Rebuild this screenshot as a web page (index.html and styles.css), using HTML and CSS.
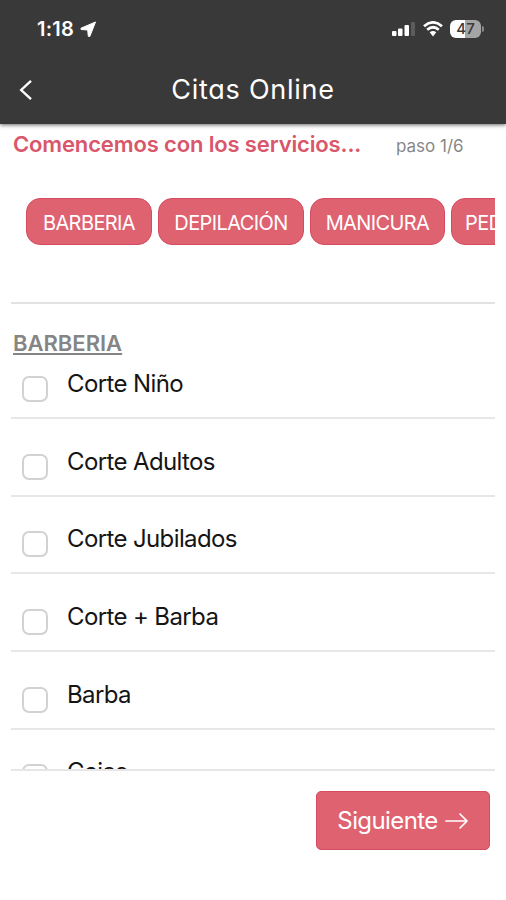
FILE: index.html
```html
<!DOCTYPE html>
<html lang="es">
<head>
<meta charset="utf-8">
<title>Citas Online</title>
<link rel="stylesheet" href="styles.css">
</head>
<body>
<header class="top">
  <div class="status">
    <span class="time">1:18</span>
    <svg class="location" width="17" height="17" viewBox="0 0 17 17"><path d="M15.500 1 9.800 15.500 8.300 15.300 7.700 9 1 8.500 1 7.200Z" fill="#fff" stroke="#fff" stroke-linejoin="round"/></svg>
    <span class="spacer"></span>
    <svg class="signal" width="24" height="16" viewBox="0 0 24 16"><g fill="#fff"><rect x="0" y="10" width="4.500" height="5" rx="1"/><rect x="6" y="7.500" width="4.500" height="7.500" rx="1"/><rect x="12.500" y="4" width="4.500" height="11" rx="1"/><rect x="19" y="1" width="4" height="14" rx="1" opacity=".18"/></g></svg>
    <svg class="wifi" width="20" height="16" viewBox="0 0 20 16"><g fill="none" stroke="#fff" stroke-width="2.700"><path d="M1 5.200Q10-2.500 19 5.200"/><path d="M4.200 8.700Q10 3.800 15.800 8.700"/></g><path d="M6.700 11.300Q10 8.500 13.300 11.300L10 15.500Z" fill="#fff"/></svg>
    <span class="battery">47</span><span class="battery-tip"></span>
  </div>
  <nav class="bar">
    <svg class="back" width="14" height="22" viewBox="0 0 14 22"><path d="M12 1.800 2.200 11l9.800 9.200" fill="none" stroke="#fff" stroke-width="2.400"/></svg>
    <h1>Citas Online</h1>
  </nav>
</header>
<main>
  <div class="intro"><h2>Comencemos con los servicios...</h2><span class="step">paso 1/6</span></div>
  <div class="chips">
    <button class="chip barberia">BARBERIA</button>
    <button class="chip depilacion">DEPILACIÓN</button>
    <button class="chip manicura">MANICURA</button>
    <button class="chip pedicura">PEDICURA</button>
  </div>
  <section class="services">
    <h3>BARBERIA</h3>
    <label class="row"><input type="checkbox"><span>Corte Niño</span></label>
    <label class="row"><input type="checkbox"><span>Corte Adultos</span></label>
    <label class="row"><input type="checkbox"><span>Corte Jubilados</span></label>
    <label class="row"><input type="checkbox"><span>Corte + Barba</span></label>
    <label class="row"><input type="checkbox"><span>Barba</span></label>
    <label class="row"><input type="checkbox"><span>Cejas</span></label>
  </section>
  <footer><button class="next">Siguiente <svg width="24" height="18" viewBox="0 0 24 18"><path d="M1 9h21M15 2l7 7-7 7" fill="none" stroke="#fff" stroke-width="1.700" stroke-linecap="round" stroke-linejoin="round"/></svg></button></footer>
</main>
</body>
</html>
```

FILE: styles.css
```css
* { box-sizing: border-box; }
body { margin: 0; height: 900px; overflow: hidden; background: #fff; font-family: Inter, "Liberation Sans", sans-serif; }
h1, h2, h3 { margin: 0; }
button { border: 0; font-family: inherit; color: #fff; background: #df6270; }
.top { height: 124px; background: #393939; color: #fff; box-shadow: 0 1px 4px #0009; }
.status { display: flex; height: 56px; align-items: center; padding: 2px 22px 0 37px; }
.time { width: 38px; font-size: 20px; font-weight: 600; letter-spacing: .2px; }
.location { margin-left: 5px; }
.spacer { flex: 1; }
.wifi { margin-left: 7px; }
.battery { width: 31px; height: 18px; margin-left: 7px; border-radius: 6px; background: linear-gradient(90deg, #fff 48%, #a5a5a5 48%); color: #393939; font-size: 15px; line-height: 18px; font-weight: 500; text-align: center; }
.battery-tip { width: 2px; height: 6px; margin-left: 1px; border-radius: 0 2px 2px 0; background: #888; }
.bar { display: grid; grid-template-columns: 40px 1fr 40px; height: 68px; align-items: center; }
.back { margin-left: 19px; }
h1 { position: relative; top: -1px; font-size: 27px; font-weight: 400; letter-spacing: .75px; text-align: center; font-feature-settings: "cv11"; }
main { padding: 0 11px; }
.intro { display: flex; height: 74px; padding: 5px 0 0 2px; line-height: 30px; white-space: nowrap; }
h2 { width: 383px; color: #da566a; font-size: 22px; font-weight: 600; letter-spacing: -.14px; }
.step { padding-top: 2px; color: #878787; font-size: 17px; }
.chips { display: flex; gap: 6px; height: 106px; padding: 0 0 0 15px; overflow: hidden; border-bottom: 2px solid #e2e2e2; }
.chip { flex: none; height: 47px; padding: 2px 0 0; border: 1px solid #d54c62; border-radius: 14px; font-size: 20px; letter-spacing: -.6px; white-space: nowrap; }
.barberia { width: 126px; }
.depilacion { width: 146px; }
.manicura { width: 135px; }
.pedicura { width: 124px; }
.services { height: 467px; padding-top: 26px; overflow: hidden; border-bottom: 2px solid #e6e6e6; }
h3 { height: 34px; padding-left: 2px; color: #858585; font-size: 22px; line-height: 27px; font-weight: 600; text-decoration: underline; text-decoration-thickness: 2px; text-underline-offset: 2px; }
.row { display: flex; height: 77.700px; padding: 0 0 0 11px; border-bottom: 2px solid #e7e7e7; align-items: flex-start; color: #151515; font-size: 24px; line-height: 30px; letter-spacing: -.62px; }
.row:first-of-type { height: 55px; }
.row:not(:first-of-type) { padding-top: 22.700px; }
.row span { margin: 5px 0 0 20px; }
.row input { appearance: none; flex: none; width: 26px; height: 26px; margin: 12px 0 0; border: 2px solid #d2d2d2; border-radius: 7px; background: #fff; }
.row span { margin-left: 19px; }
footer { display: flex; justify-content: flex-end; padding: 20px 5px 0 0; }
.next { display: flex; width: 174px; height: 59px; align-items: center; justify-content: center; gap: 7px; border: 1px solid #d54c62; border-radius: 5px; font-size: 24px; letter-spacing: -.6px; }
```
